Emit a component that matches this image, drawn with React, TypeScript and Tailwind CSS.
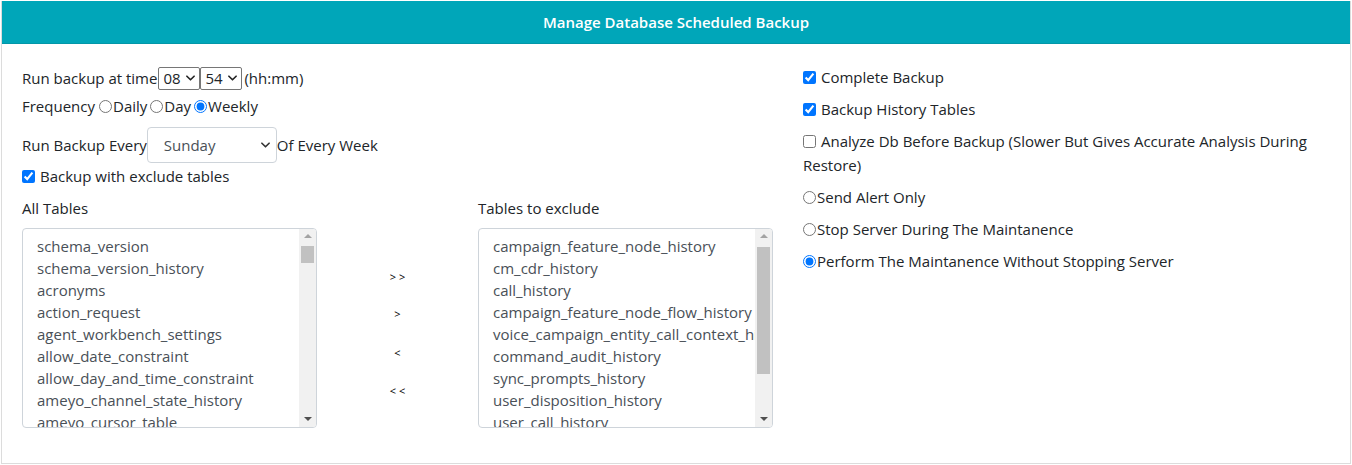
import React from 'react';

const allTables = [
  'schema_version',
  'schema_version_history',
  'acronyms',
  'action_request',
  'agent_workbench_settings',
  'allow_date_constraint',
  'allow_day_and_time_constraint',
  'ameyo_channel_state_history',
  'ameyo_cursor_table',
  'ameyo_event_log',
];

const excludeTables = [
  'campaign_feature_node_history',
  'cm_cdr_history',
  'call_history',
  'campaign_feature_node_flow_history',
  'voice_campaign_entity_call_context_history',
  'command_audit_history',
  'sync_prompts_history',
  'user_disposition_history',
  'user_call_history',
  'user_login_history',
];

const Chevron = ({ className }: { className?: string }) => (
  <svg viewBox="0 0 10 6" className={className} fill="none" stroke="currentColor" strokeWidth="1.8" strokeLinecap="round" strokeLinejoin="round">
    <path d="M1 1l4 4 4-4" />
  </svg>
);

const TimeSelect = ({ value }: { value: string }) => (
  <div className="flex h-[23px] w-[42px] items-center justify-between rounded-[2px] border border-[#767676] bg-white pl-[4px] pr-[4px] text-[15px] text-[#212529]">
    <span>{value}</span>
    <Chevron className="h-[6px] w-[9px] text-[#222]" />
  </div>
);

const ListBox = ({ items, thumbTop, thumbHeight }: { items: string[]; thumbTop: number; thumbHeight: number }) => (
  <div className="flex h-[200px] w-[295px] overflow-hidden rounded-[4px] border border-[#ced4da] bg-white">
    <div className="flex-1 overflow-hidden whitespace-nowrap pl-[14px] pt-[6px] text-[15px] leading-[22px] text-[#495057]">
      {items.map((t) => (
        <div key={t}>{t}</div>
      ))}
    </div>
    <div className="relative flex w-[17px] flex-col items-center bg-[#f1f1f1]">
      <div className="mt-[5px] h-0 w-0 border-x-[4px] border-b-[4px] border-x-transparent border-b-[#a3a3a3]" />
      <div className="absolute left-[2px] w-[13px] bg-[#c1c1c1]" style={{ top: thumbTop, height: thumbHeight }} />
      <div className="mt-auto mb-[6px] h-0 w-0 border-x-[4px] border-t-[4px] border-x-transparent border-t-[#505050]" />
    </div>
  </div>
);

export default function App() {
  return (
    <div className="h-[465px] w-[1352px] bg-white p-px font-['Open_Sans',sans-serif] text-[15px] text-[#212529]">
      <div className="h-[463px] w-[1350px] border border-t-0 border-[#dcdcdc]">
        <div className="flex h-[43px] items-center justify-center border-b border-[#0397a8] bg-[#00a6b9] text-[15px] font-semibold text-white">
          Manage Database Scheduled Backup
        </div>

        <div className="grid grid-cols-[758px_1fr] gap-[23px] pl-[20px] pr-[20px] pt-[22px]">
          <div className="flex flex-col">
            <div className="flex h-[24px] items-center">
              <span className="mr-px">Run backup at time</span>
              <TimeSelect value="08" />
              <TimeSelect value="54" />
              <span className="ml-[2px]">(hh:mm)</span>
            </div>

            <div className="mt-[4px] flex h-[24px] items-center">
              <span className="mr-[4px]">Frequency</span>
              <input type="radio" name="freq" className="m-0 mr-[1px] h-[13px] w-[13px]" />
              <span className="mr-[3px]">Daily</span>
              <input type="radio" name="freq" className="m-0 mr-[1px] h-[13px] w-[13px]" />
              <span className="mr-[3px]">Day</span>
              <input type="radio" name="freq" defaultChecked className="m-0 mr-[1px] h-[13px] w-[13px]" />
              <span>Weekly</span>
            </div>

            <div className="mt-[9px] flex h-[36px] items-center">
              <span>Run Backup Every</span>
              <div className="flex h-[36px] w-[130px] items-center justify-between rounded-[4px] border border-[#ced4da] bg-white pl-[16px] pr-[6px] text-[#495057]">
                <span>Sunday</span>
                <Chevron className="h-[6px] w-[9px] text-[#333]" />
              </div>
              <span>Of Every Week</span>
            </div>

            <div className="mt-px flex h-[24px] items-center gap-[5px]">
              <input type="checkbox" defaultChecked className="m-0 h-[13px] w-[13px]" />
              <span>Backup with exclude tables</span>
            </div>

            <div className="mt-[8px] flex h-[24px] items-center">
              <span className="w-[456px]">All Tables</span>
              <span>Tables to exclude</span>
            </div>

            <div className="mt-[8px] flex items-start">
              <ListBox items={allTables} thumbTop={17} thumbHeight={17} />
              <div className="flex w-[161px] flex-col items-center pt-[40px] text-[11px] leading-[18px] text-black">
                <div>&gt; &gt;</div>
                <div className="mt-[19px]">&gt;</div>
                <div className="mt-[21px]">&lt;</div>
                <div className="mt-[20px]">&lt; &lt;</div>
              </div>
              <ListBox items={excludeTables} thumbTop={18} thumbHeight={127} />
            </div>
          </div>

          <div className="-mt-px flex flex-col gap-[8px] leading-[24px]">
            <label className="flex items-center gap-[5px]">
              <input type="checkbox" defaultChecked className="m-0 h-[13px] w-[13px]" />
              <span>Complete Backup</span>
            </label>
            <label className="flex items-center gap-[5px]">
              <input type="checkbox" defaultChecked className="m-0 h-[13px] w-[13px]" />
              <span>Backup History Tables</span>
            </label>
            <div className="pr-[12px]">
              <input type="checkbox" className="m-0 mr-[5px] h-[13px] w-[13px] align-[-1px]" />
              Analyze Db Before Backup (Slower But Gives Accurate Analysis During Restore)
            </div>
            <label className="flex items-center gap-px">
              <input type="radio" name="maint" className="m-0 h-[13px] w-[13px]" />
              <span>Send Alert Only</span>
            </label>
            <label className="flex items-center gap-px">
              <input type="radio" name="maint" className="m-0 h-[13px] w-[13px]" />
              <span>Stop Server During The Maintanence</span>
            </label>
            <label className="flex items-center gap-px">
              <input type="radio" name="maint" defaultChecked className="m-0 h-[13px] w-[13px]" />
              <span>Perform The Maintanence Without Stopping Server</span>
            </label>
          </div>
        </div>
      </div>
    </div>
  );
}
